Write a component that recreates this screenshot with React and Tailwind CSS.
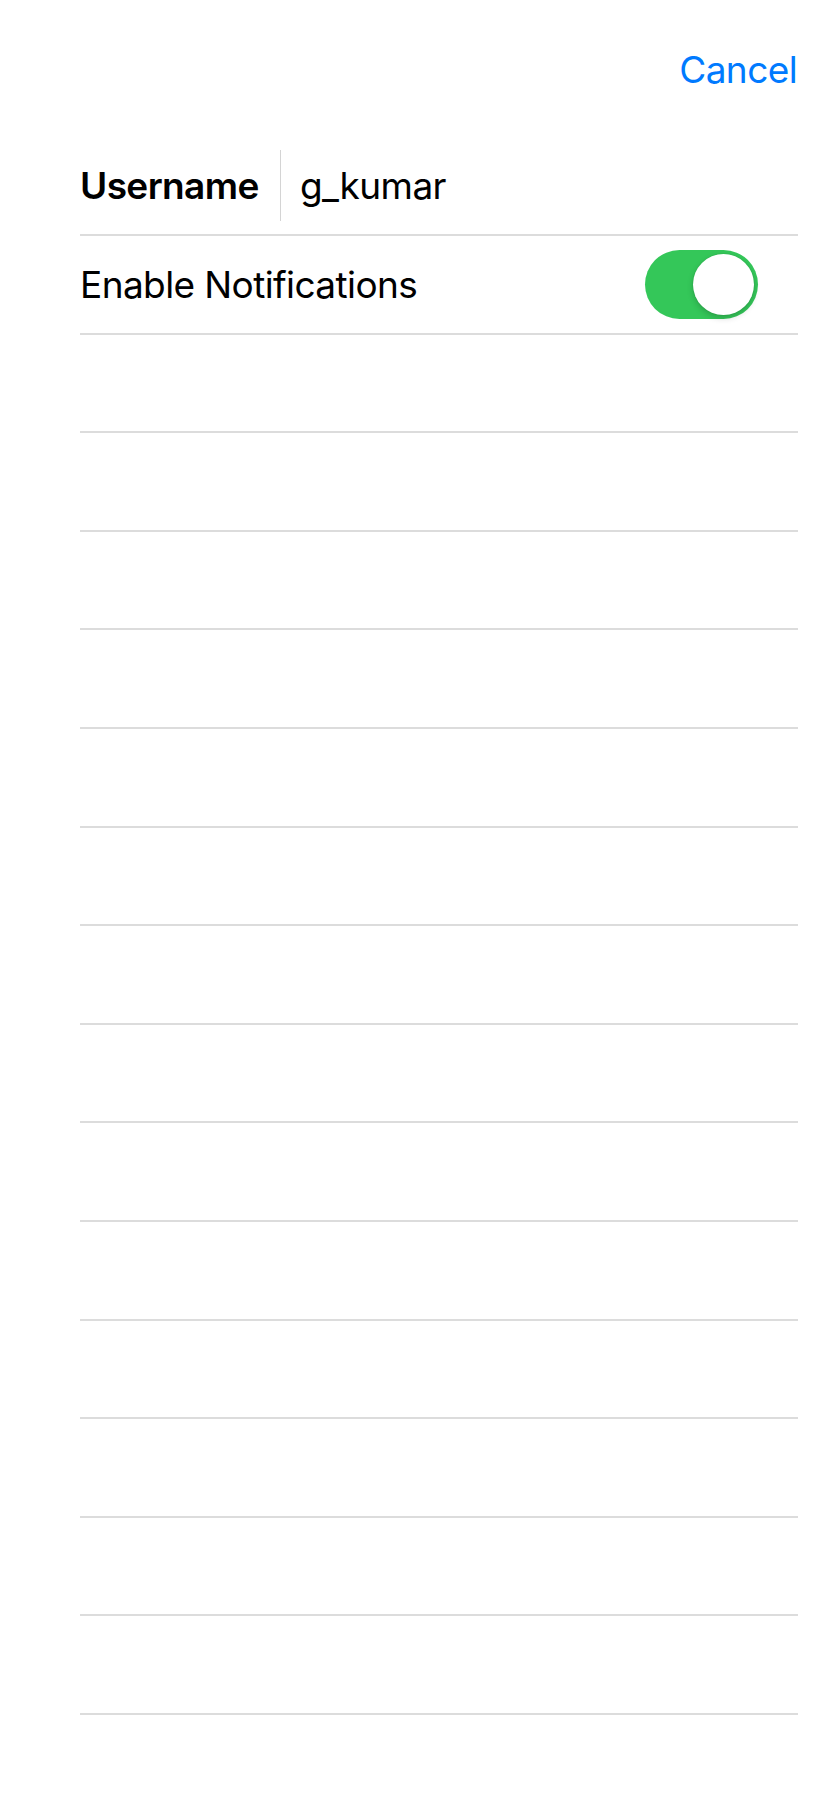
import { useState } from 'react'

const font = { fontFamily: 'Inter, "Noto Sans", sans-serif' }

function Toggle({ on, onChange }) {
  return (
    <button
      onClick={() => onChange(!on)}
      className={`relative w-[113px] h-[69px] rounded-full flex items-center px-[4px] ${on ? 'bg-[#34c759] justify-end' : 'bg-[#e9e9ea] justify-start'}`}
    >
      <span className="block w-[61px] h-[61px] rounded-full bg-white shadow-[0_3px_6px_rgba(0,0,0,0.18),0_0_0_1px_rgba(0,0,0,0.04)]" />
    </button>
  )
}

export default function App() {
  const [notify, setNotify] = useState(true)
  const emptyRows = Array.from({ length: 14 })

  return (
    <div className="min-h-[1806px] bg-white text-black" style={font}>
      <div className="h-[137px] flex items-start justify-end pr-[37px]">
        <button className="mt-[48px] text-[37px] leading-[44px] tracking-[-0.6px] text-[#007aff]">Cancel</button>
      </div>

      <div className="pl-[80px] pr-[36px]">
        <div className="h-[99px] flex items-center border-b-2 border-[#dcdcdc]">
          <span className="w-[200px] text-[37px] font-semibold tracking-[-0.6px]">Username</span>
          <span className="w-px h-[71px] bg-[#d4d4d4]" />
          <span className="pl-[19px] text-[37px] tracking-[-0.6px]">g_kumar</span>
        </div>

        <div className="h-[98.6px] flex items-center justify-between border-b-2 border-[#dcdcdc]">
          <span className="text-[37px] tracking-[-0.6px]">Enable Notifications</span>
          <div className="mr-[40px]">
            <Toggle on={notify} onChange={setNotify} />
          </div>
        </div>

        {emptyRows.map((_, i) => (
          <div key={i} className="h-[98.6px] border-b-2 border-[#dcdcdc]" />
        ))}
      </div>
    </div>
  )
}
